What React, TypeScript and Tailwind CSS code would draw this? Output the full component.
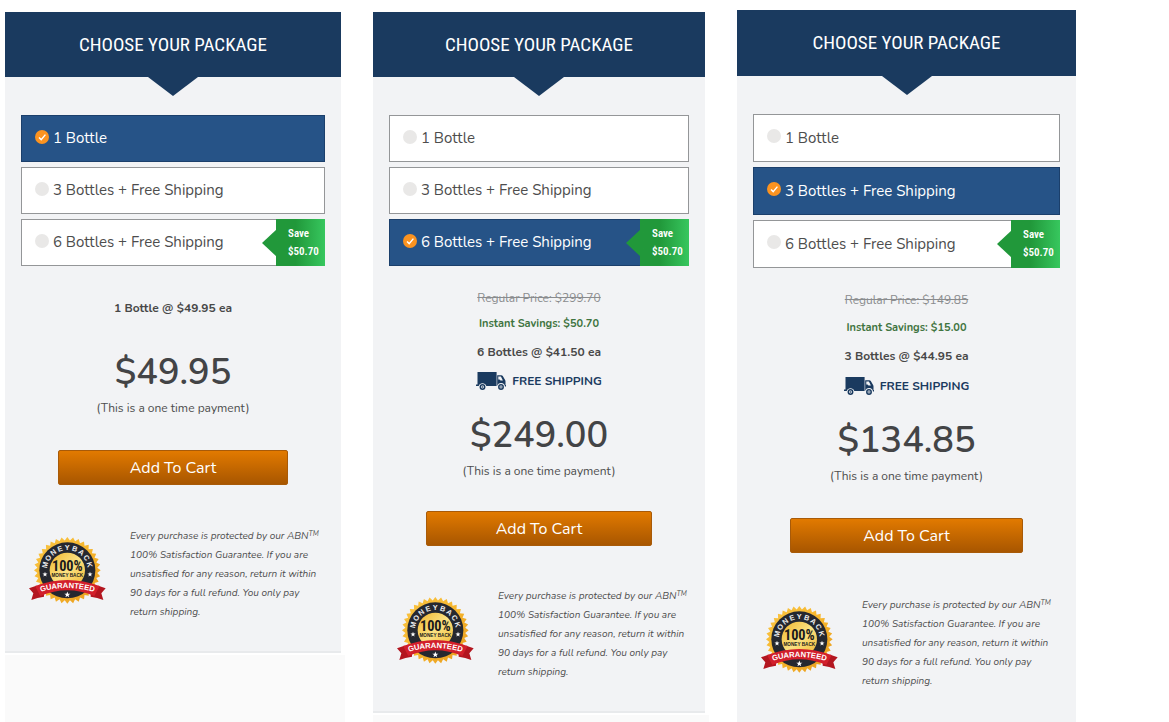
import { useId } from "react";
import clsx from "clsx";

type Pack = {
  selected: number;
  regular?: string;
  savings?: string;
  each: string;
  freeShipping: boolean;
  price: string;
  top: string;
  header: string;
  option: string;
  summary: string;
  row: string;
  button: string;
  note: string;
  fill?: boolean;
};

const packs: Pack[] = [
  {
    selected: 0,
    each: "1 Bottle @ $49.95 ea",
    freeShipping: false,
    price: "$49.95",
    top: "pt-3",
    header: "h-[65px]",
    option: "h-[47px]",
    summary: "mt-7",
    row: "h-7",
    button: "mt-[30px]",
    note: "mt-[42px]",
  },
  {
    selected: 2,
    regular: "Regular Price: $299.70",
    savings: "Instant Savings: $50.70",
    each: "6 Bottles @ $41.50 ea",
    freeShipping: true,
    price: "$249.00",
    top: "pt-3",
    header: "h-[65px]",
    option: "h-[47px]",
    summary: "mt-[18px]",
    row: "h-[27px]",
    button: "mt-7",
    note: "mt-[41px]",
  },
  {
    selected: 1,
    regular: "Regular Price: $149.85",
    savings: "Instant Savings: $15.00",
    each: "3 Bottles @ $44.95 ea",
    freeShipping: true,
    price: "$134.85",
    top: "pt-[10px]",
    header: "h-[66px]",
    option: "h-12",
    summary: "mt-[18px]",
    row: "h-7",
    button: "mt-[30px]",
    note: "mt-[43px]",
    fill: true,
  },
];

const options = ["1 Bottle", "3 Bottles + Free Shipping", "6 Bottles + Free Shipping"];

const condensed = "font-['Roboto_Condensed','Liberation_Sans_Narrow',Roboto,sans-serif]";

function SaveTag() {
  return (
    <span
      className={clsx(
        condensed,
        "absolute -inset-y-px -right-px flex w-[49px] flex-col justify-center bg-linear-to-r from-[#21983a] from-40% to-[#37c75e] pl-3 text-[11px] leading-[18px] font-semibold text-white",
      )}
    >
      <svg className="absolute top-[10px] -left-[14px] h-7 w-[15px]" viewBox="0 0 15 28" aria-hidden="true">
        <path d="M15 0v28L0 14z" fill="#21983a" />
      </svg>
      <span>Save</span>
      <span>$50.70</span>
    </span>
  );
}

type OptionProps = { name: string; label: string; checked: boolean; save: boolean; height: string };

function Option({ name, label, checked, save, height }: OptionProps) {
  return (
    <label
      className={clsx(
        "relative flex cursor-pointer items-center gap-1 border border-[#949698] bg-white pl-[13px] text-[15px] text-[#4d4d4d] has-checked:border-[#1b3f6b] has-checked:bg-[#265387] has-checked:text-white",
        height,
      )}
    >
      <span className="mb-1 grid size-[14px]">
        <input
          type="radio"
          name={name}
          defaultChecked={checked}
          className="peer col-start-1 row-start-1 size-[14px] appearance-none rounded-full bg-[#e9e8e7] checked:bg-[#fb9320]"
        />
        <svg
          className="pointer-events-none invisible col-start-1 row-start-1 size-[14px] peer-checked:visible"
          viewBox="0 0 14 14"
          fill="none"
          stroke="#fff"
          strokeWidth="1.4"
          aria-hidden="true"
        >
          <path d="M4 7.4 6.2 9.6 10.4 4.6" />
        </svg>
      </span>
      <span>{label}</span>
      {save && <SaveTag />}
    </label>
  );
}

function Truck() {
  return (
    <svg className="h-[18px] w-[30px]" viewBox="0 0 30 18" aria-hidden="true">
      <path d="M1.5 0H20.6v14H10.3a4 4 0 0 0-7.6 0H0V12.6h1.5z" fill="#1a3a5f" />
      <path d="M21.2 3.2h4c.7 0 1.2.3 1.6.9l2.3 4c.3.4.4.9.4 1.4V13h.5v1.5h-1a4 4 0 0 0-7.8-.5z" fill="#1a3a5f" />
      <path d="M22.3 4.6h2.6l2 3.8h-2.4l-1-1h-1.2z" fill="#f2f3f5" />
      <circle cx="6.5" cy="15" r="2.2" fill="none" stroke="#1a3a5f" strokeWidth="1.5" />
      <circle cx="6.5" cy="15" r=".8" fill="#1a3a5f" />
      <circle cx="25" cy="15" r="2.2" fill="none" stroke="#1a3a5f" strokeWidth="1.5" />
      <circle cx="25" cy="15" r=".8" fill="#1a3a5f" />
    </svg>
  );
}

const teeth = Array.from({ length: 72 }, (_, i) => {
  const r = i % 2 ? 90 : 100;
  const a = (i * Math.PI) / 36;
  return `${(143 + r * Math.sin(a)).toFixed(1)},${(118 - r * Math.cos(a)).toFixed(1)}`;
}).join(" ");

const star = "M0-8 2-2.6 7.6-2.5 3.1 1 4.7 6.5 0 3.2-4.7 6.5-3.1 1-7.6-2.5-2-2.6z";

// Each letter of the ring stands on a circle of radius 61, 19 degrees from the next.
const ringAdvance = [0.83, 0.78, 0.72, 0.67, 0.67, 0.72, 0.72, 0.72, 0.72];
const ringLetters = ringAdvance.map((em, i) => {
  const deg = (i - 4) * 19;
  const a = (deg * Math.PI) / 180;
  const half = (em * 22) / 2;
  return {
    x: 143 + 61 * Math.sin(a) - half * Math.cos(a),
    y: 118 - 61 * Math.cos(a) - half * Math.sin(a),
    deg,
  };
});

function Seal() {
  const id = useId();
  return (
    <svg className="h-[67px] w-[77px] shrink-0" viewBox="28 18 231 201" role="img" aria-label="Money back guaranteed">
      <defs>
        <linearGradient id={`${id}g`} x1="0" y1="0" x2="1" y2="1">
          <stop offset="0" stopColor="#f9c646" />
          <stop offset=".5" stopColor="#f6b52c" />
          <stop offset="1" stopColor="#e79a1c" />
        </linearGradient>
        <linearGradient id={`${id}i`} x1="0" y1="0" x2="1" y2="1">
          <stop offset="0" stopColor="#f0b52c" />
          <stop offset=".5" stopColor="#fbe283" />
          <stop offset="1" stopColor="#f1b62f" />
        </linearGradient>
        <path id={`${id}b`} d="M58 184Q143 158 228 184" />
      </defs>
      <polygon points={teeth} fill={`url(#${id}g)`} />
      <circle cx="143" cy="118" r="84" fill="#252830" />
      <circle cx="143" cy="118" r="53" fill={`url(#${id}i)`} />
      <g fontFamily="Liberation Sans, sans-serif" fontWeight="700">
        <text
          fill="#eee"
          fontSize="22"
          x={ringLetters.map((l) => l.x.toFixed(1)).join(" ")}
          y={ringLetters.map((l) => l.y.toFixed(1)).join(" ")}
          rotate={ringLetters.map((l) => l.deg).join(" ")}
        >
          MONEYBACK
        </text>
        <text
          x="143"
          y="120"
          fontSize="43"
          fill="#1b1b1b"
          textAnchor="middle"
          fontFamily="Roboto Condensed, Liberation Sans Narrow, Roboto, sans-serif"
        >
          100%
        </text>
        <text x="143" y="139" fontSize="14" fill="#1b1b1b" textAnchor="middle">
          MONEY BACK
        </text>
      </g>
      <g fill="#fff">
        <path d={star} transform="translate(76 130)" />
        <path d={star} transform="translate(211 130)" />
        <path d={star} transform="translate(143 191) scale(1.2)" />
      </g>
      <path d="M50 164 28 172l13 15-6 20q18-8 38-10V178z" fill="#b3151f" />
      <path d="M236 164l22 8-13 15 6 20q-18-8-38-10V178z" fill="#b3151f" />
      <path d="M46 165Q143 129 240 165L224 195Q143 160 62 195z" fill="#d21f2b" />
      <text fontFamily="Liberation Sans, sans-serif" fontWeight="700" fontSize="23" fill="#fff" textAnchor="middle">
        <textPath href={`#${id}b`} startOffset="50%">
          GUARANTEED
        </textPath>
      </text>
    </svg>
  );
}

function PackageCard({ pack }: { pack: Pack }) {
  const name = useId();
  return (
    <section className={clsx("bg-[#f2f3f5]", pack.fill ? "flex-1" : "border-b-2 border-[#e8eaec]")}>
      <header className={clsx("relative flex items-center justify-center bg-[#1a3a5f]", pack.header)}>
        <h2 className={clsx(condensed, "text-[19px] leading-6 text-white")}>CHOOSE YOUR PACKAGE</h2>
        <svg className="absolute top-full left-1/2 h-[19px] w-[50px] -translate-x-1/2" viewBox="0 0 50 19" aria-hidden="true">
          <path d="M0 0h50L25 19z" fill="#1a3a5f" />
        </svg>
      </header>
      <div className="flex flex-col px-4 pt-[38px] pb-[29px]">
        <div className="flex flex-col gap-[5px]" role="radiogroup" aria-label="Package">
          {options.map((label, i) => (
            <Option
              key={label}
              name={name}
              label={label}
              checked={i === pack.selected}
              save={i === 2}
              height={pack.option}
            />
          ))}
        </div>

        <div className={clsx("flex flex-col items-center text-[12px]", pack.summary)}>
          {pack.regular && <p className={clsx("flex items-center text-[#8a8c8e] line-through", pack.row)}>{pack.regular}</p>}
          {pack.savings && (
            <p className={clsx("flex items-center text-[11px] font-bold text-[#3f7440]", pack.row)}>{pack.savings}</p>
          )}
          <p className={clsx("flex items-center font-bold text-[#484848]", pack.row)}>{pack.each}</p>
          {pack.freeShipping && (
            <p className="flex h-8 items-center gap-[6px] font-bold text-[#1a3a5f]">
              <Truck />
              FREE SHIPPING
            </p>
          )}
        </div>

        <p
          className={clsx(
            "text-center text-[36px] leading-[46px] font-semibold text-[#434446]",
            pack.freeShipping ? "mt-4" : "mt-7",
          )}
        >
          {pack.price}
        </p>
        <p className="text-center text-[12px] leading-6 text-[#4d4d4d]">(This is a one time payment)</p>

        <button
          type="button"
          className={clsx(
            "mx-[37px] h-[35px] cursor-pointer rounded-[2px] border border-[#a85a08] bg-linear-to-b from-[#e27a00] to-[#a85600] text-[16px] text-white",
            pack.button,
          )}
        >
          Add To Cart
        </button>

        <div className={clsx("flex gap-6 pl-2", pack.note)}>
          <div className="pt-[10px]">
            <Seal />
          </div>
          <p className="text-[10px] leading-[19px] text-[#4d4d4d] italic">
            Every purchase is protected by our ABN<sup className="text-[7px]">TM</sup>
            <br />
            100% Satisfaction Guarantee. If you are
            <br />
            unsatisfied for any reason, return it within
            <br />
            90 days for a full refund. You only pay
            <br />
            return shipping.
          </p>
        </div>
      </div>
    </section>
  );
}

export default function App() {
  return (
    <main className="grid h-screen grid-cols-[336fr_332fr_339fr] gap-8 overflow-hidden bg-white pr-[93px] pl-[5px] font-['Nunito',Lato,sans-serif]">
      {packs.map((pack) => (
        <div key={pack.price} className={clsx("flex min-w-0 flex-col", pack.top)}>
          <PackageCard pack={pack} />
          {!pack.fill && <div className="mt-[2px] -mr-1 flex-1 bg-[#fafafa]" />}
        </div>
      ))}
    </main>
  );
}
